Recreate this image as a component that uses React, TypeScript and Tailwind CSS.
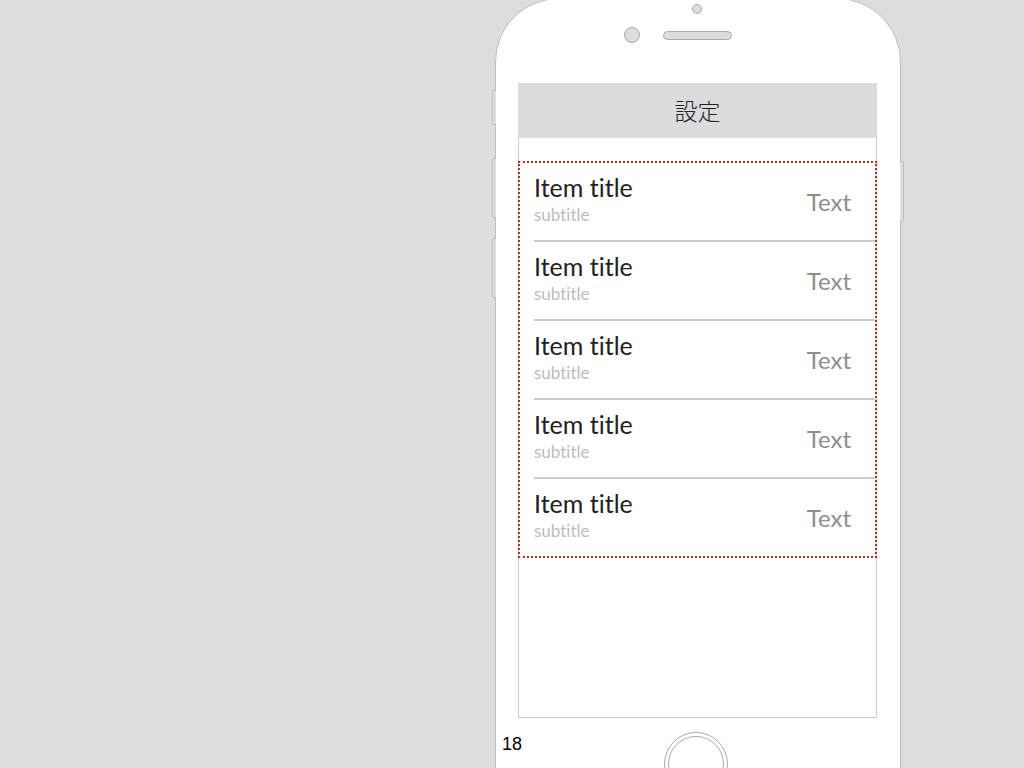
import React from "react";

const rows = [1, 2, 3, 4, 5];

function Row({ last }: { last: boolean }) {
    return (
        <div>
            <div className="flex h-[77px] items-center justify-between pl-[14px] pr-[24px]">
                <div className="flex flex-col pb-[6px]">
                    <span className="mb-[4px] text-[25px] leading-[28px] text-[#222222]">Item title</span>
                    <span className="text-[17px] leading-[20px] text-[#bdbdbd]">subtitle</span>
                </div>
                <span className="text-[24px] leading-[28px] text-[#8e8e8e]">Text</span>
            </div>
            {!last && <div className="ml-[14px] h-[2px] bg-[#cacaca]" />}
        </div>
    );
}

export default function App() {
    return (
        <div className="relative h-[768px] w-[1024px] overflow-hidden bg-[#dcdddf] font-['Lato',sans-serif] [font-variant-ligatures:none]">
            <div className="relative -mt-[2px] ml-[495px] h-[840px] w-[406px] rounded-[64px] border border-[#bdbdbd] bg-white">
                {/* side buttons */}
                <div className="absolute -left-[4px] top-[91px] h-[35px] w-[4px] rounded-l-[2px] border border-r-0 border-[#bdbdbd] bg-[#dcdddf]" />
                <div className="absolute -left-[4px] top-[159px] h-[60px] w-[4px] rounded-l-[2px] border border-r-0 border-[#bdbdbd] bg-[#dcdddf]" />
                <div className="absolute -left-[4px] top-[239px] h-[60px] w-[4px] rounded-l-[2px] border border-r-0 border-[#bdbdbd] bg-[#dcdddf]" />
                <div className="absolute -right-[4px] top-[162px] h-[61px] w-[4px] rounded-r-[2px] border border-l-0 border-[#bdbdbd] bg-[#dcdddf]" />

                <div className="flex flex-col">
                    <div className="ml-[196px] mt-[5px] h-[10px] w-[10px] rounded-full border border-[#a9a9a9] bg-[#dcdcdc]" />
                    <div className="mt-[13px] flex items-center">
                        <div className="ml-[128px] h-[16px] w-[16px] rounded-full border border-[#a9a9a9] bg-[#dcdcdc]" />
                        <div className="ml-[23px] h-[9px] w-[69px] rounded-full border border-[#a9a9a9] bg-[#dcdcdc]" />
                    </div>

                    <div className="ml-[22px] mt-[40px] flex h-[635px] w-[359px] flex-col border-x border-b border-[#cacaca]">
                        <div className="-mx-px flex h-[55px] items-center justify-center bg-[#dcdcde]">
                            <span className="font-['Noto_Sans_CJK_JP',sans-serif] text-[23px] font-light text-[#222222]">設定</span>
                        </div>
                        <div className="-mx-px mt-[23px] border-2 border-dotted border-[#b3301f]">
                            {rows.map((r, i) => (
                                <Row key={r} last={i === rows.length - 1} />
                            ))}
                        </div>
                    </div>

                    <div className="ml-[168px] mt-[14px] flex h-[64px] w-[64px] items-center justify-center rounded-full border border-[#ababab]">
                        <div className="h-[56px] w-[56px] rounded-full border border-[#ababab]" />
                    </div>
                </div>
            </div>
            <span className="absolute left-[502px] top-[731px] font-['Liberation_Sans',sans-serif] text-[18px] text-black">18</span>
        </div>
    );
}
